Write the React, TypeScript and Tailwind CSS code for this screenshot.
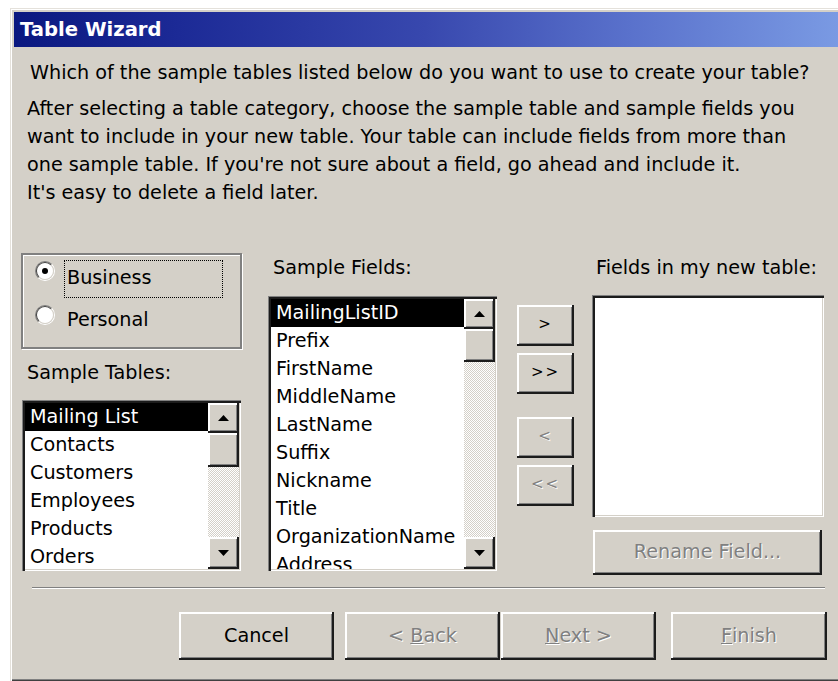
import React from "react";

const face = "font-['DejaVu_Sans',sans-serif]";

const raised =
  "bg-[#d4d0c8] shadow-[inset_-2px_-2px_0_#1c1c1c,inset_2px_2px_0_#ffffff,inset_-3px_-3px_0_#808080]";

const sunken =
  "bg-white shadow-[inset_1px_1px_0_#808080,inset_3px_3px_0_#1c1c1c,inset_-1px_-1px_0_#ffffff,inset_-2px_-2px_0_#d4d0c8]";

const disabledText = "text-[#808080] [text-shadow:1px_1px_0_#ffffff]";

function Arrow({ dir }: { dir: "up" | "down" }) {
  return (
    <svg width="11" height="6" viewBox="0 0 11 6">
      {dir === "up" ? (
        <polygon points="5.5,0 11,6 0,6" fill="#000" />
      ) : (
        <polygon points="0,0 11,0 5.5,6" fill="#000" />
      )}
    </svg>
  );
}

function ScrollBar({ thumb }: { thumb: string }) {
  return (
    <div className="flex w-[31px] shrink-0 flex-col">
      <div className={`${raised} flex h-[30px] items-center justify-center`}>
        <Arrow dir="up" />
      </div>
      <div className={`${raised} ${thumb}`} />
      <div className="flex-1 bg-[image:repeating-conic-gradient(#ffffff_0_25%,#d4d0c8_0_50%)] bg-size-[2px_2px]" />
      <div className={`${raised} flex h-[32px] items-center justify-center`}>
        <Arrow dir="down" />
      </div>
    </div>
  );
}

function ListBox({
  items,
  size,
  thumb,
}: {
  items: string[];
  size: string;
  thumb: string;
}) {
  return (
    <div className={`${sunken} ${size} flex pb-[2px] pl-[3px] pr-[2px] pt-[3px]`}>
      <div className="flex-1 overflow-hidden">
        {items.map((item, i) => (
          <div
            key={item}
            className={`h-[28px] whitespace-nowrap pl-[5px] leading-[28px] ${
              i === 0 ? "bg-black text-white" : ""
            }`}
          >
            {item}
          </div>
        ))}
      </div>
      <ScrollBar thumb={thumb} />
    </div>
  );
}

function Radio({ checked }: { checked?: boolean }) {
  return (
    <div className="h-[20px] w-[20px] shrink-0 rounded-full border-[1.5px] border-b-white border-l-[#808080] border-r-white border-t-[#808080]">
      <div className="flex h-full w-full items-center justify-center rounded-full border-[1.5px] border-b-[#d4d0c8] border-l-[#404040] border-r-[#d4d0c8] border-t-[#404040] bg-white">
        {checked && <div className="h-[6px] w-[6px] rounded-full bg-black" />}
      </div>
    </div>
  );
}

function MoveButton({ label, enabled }: { label: string; enabled: boolean }) {
  return (
    <div
      className={`${raised} flex h-[41px] w-[57px] items-center justify-center pb-[2px] text-[15px] tracking-[2px] ${
        enabled ? "text-black" : disabledText
      }`}
    >
      {label}
    </div>
  );
}

function WizardButton({
  children,
  width,
  enabled,
}: {
  children: React.ReactNode;
  width: string;
  enabled?: boolean;
}) {
  return (
    <div
      className={`${raised} ${width} flex h-[48px] items-center justify-center whitespace-pre ${
        enabled ? "text-black" : disabledText
      }`}
    >
      {children}
    </div>
  );
}

const sampleTables = ["Mailing List", "Contacts", "Customers", "Employees", "Products", "Orders"];

const sampleFields = [
  "MailingListID",
  "Prefix",
  "FirstName",
  "MiddleName",
  "LastName",
  "Suffix",
  "Nickname",
  "Title",
  "OrganizationName",
  "Address",
];

export default function App() {
  return (
    <div className={`h-[681px] w-[838px] overflow-hidden bg-white ${face} text-[19.2px] text-black`}>
      <div className="ml-[10px] mt-[8px] h-[673px] bg-[#d4d0c8] pl-[4px] pt-[4px] shadow-[inset_1px_1px_0_#e4e1db,inset_2px_2px_0_#ffffff,inset_0_-1px_0_#404040,inset_0_-2px_0_#808080]">
        {/* caption */}
        <div className="flex h-[35px] items-center bg-[linear-gradient(to_right,#0a1880,#1c2a96_20%,#3848ae_50%,#5a72cc_75%,#7a9ae3)] pl-[6px] text-[19.6px] font-bold text-white">
          Table Wizard
        </div>

        <div className="flex flex-col">
          <p className="ml-[16px] mt-[12px] whitespace-nowrap leading-[28px]">
            Which of the sample tables listed below do you want to use to create your table?
          </p>
          <p className="ml-[13px] mt-[8px] whitespace-nowrap leading-[28px]">
            After selecting a table category, choose the sample table and sample fields you
            <br />
            want to include in your new table. Your table can include fields from more than
            <br />
            one sample table. If you're not sure about a field, go ahead and include it.
            <br />
            It's easy to delete a field later.
          </p>

          <div className="ml-[7px] mt-[46px] flex items-start">
            {/* category + sample tables */}
            <div className="flex w-[221px] flex-col">
              <div className="h-[96px] w-[221px] border-2 border-[#808080] pl-[12px] pt-[5px] shadow-[inset_1px_1px_0_#ffffff,1px_1px_0_#ffffff]">
                <div className="flex items-start">
                  <div className="mt-[1px]">
                    <Radio checked />
                  </div>
                  <div className="ml-[9px] h-[38px] w-[159px] border border-dotted border-black pl-[2px] pt-[1px] leading-[32px]">
                    Business
                  </div>
                </div>
                <div className="flex items-start">
                  <div className="mt-[7px]">
                    <Radio />
                  </div>
                  <div className="ml-[9px] mt-[6px] pl-[3px] leading-[32px]">Personal</div>
                </div>
              </div>
              <div className="mt-[10px] pl-[6px] leading-[28px]">Sample Tables:</div>
              <div className="ml-[1px] mt-[13px]">
                <ListBox items={sampleTables} size="h-[171px] w-[219px]" thumb="h-[34px]" />
              </div>
            </div>

            {/* sample fields */}
            <div className="ml-[26px] flex w-[229px] flex-col">
              <div className="mt-[1px] pl-[5px] leading-[28px]">Sample Fields:</div>
              <div className="mt-[14px]">
                <ListBox items={sampleFields} size="h-[275px] w-[229px]" thumb="h-[33px]" />
              </div>
            </div>

            {/* move buttons */}
            <div className="ml-[20px] flex w-[57px] flex-col pt-[52px]">
              <MoveButton label=">" enabled />
              <div className="mt-[7px]">
                <MoveButton label=">>" enabled />
              </div>
              <div className="mt-[23px]">
                <MoveButton label="<" enabled={false} />
              </div>
              <div className="mt-[7px]">
                <MoveButton label="<<" enabled={false} />
              </div>
            </div>

            {/* new table fields */}
            <div className="ml-[18px] flex w-[232px] flex-col">
              <div className="mt-[1px] whitespace-nowrap pl-[4px] leading-[28px]">
                Fields in my new table:
              </div>
              <div className={`${sunken} mt-[13px] h-[222px] w-[232px]`} />
              <div
                className={`${raised} ${disabledText} ml-[1px] mt-[13px] flex h-[45px] w-[229px] items-center justify-center`}
              >
                Rename Field...
              </div>
            </div>
          </div>

          <div className="ml-[18px] mt-[12px] w-[793px] border-b border-t border-b-white border-t-[#808080]" />

          <div className="ml-[165px] mt-[23px] flex">
            <WizardButton width="w-[155px]" enabled>
              Cancel
            </WizardButton>
            <div className="ml-[11px]">
              <WizardButton width="w-[155px]">
                {"< "}
                <span className="underline">B</span>
                {"ack"}
              </WizardButton>
            </div>
            <div className="ml-[1px]">
              <WizardButton width="w-[155px]">
                <span className="underline">N</span>
                {"ext >"}
              </WizardButton>
            </div>
            <div className="ml-[15px]">
              <WizardButton width="w-[156px]">
                <span className="underline">F</span>
                {"inish"}
              </WizardButton>
            </div>
          </div>
        </div>
      </div>
    </div>
  );
}
